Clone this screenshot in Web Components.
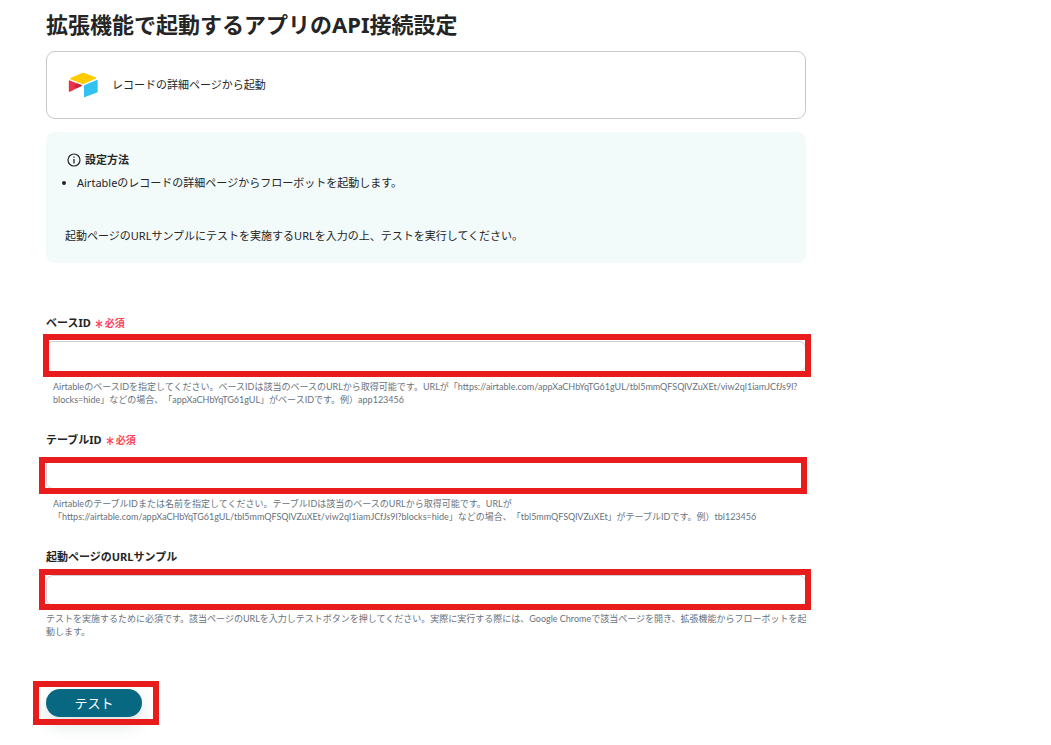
<!DOCTYPE html>
<html lang="ja">
<head>
<meta charset="utf-8">
<title>API接続設定</title>
<style>
body { margin: 0; background: #fff; color: #252525; font-family: "Noto Sans", "Noto Sans CJK JP", sans-serif; font-size: 11px; line-height: 20px; text-spacing-trim: space-all; }
</style>
</head>
<body>
<connection-page></connection-page>
<script>
class BaseElement extends HTMLElement {
  render(html) {
    const t = document.createElement("template");
    t.innerHTML = html;
    this.attachShadow({ mode: "open" }).append(t.content.cloneNode(true));
  }
}

customElements.define("app-card", class extends BaseElement {
  constructor() {
    super();
    this.render(`<style>
      :host { display: flex; align-items: center; gap: 13px; box-sizing: border-box; min-height: 68px; padding: 0 21px; border: 1px solid #c8c8c8; border-radius: 9px; }
      svg { display: block; flex: none; }
    </style>
    <svg width="31" height="26" viewBox="0 0 31 26" aria-hidden="true">
      <path fill="#ffcc00" d="M14 1.1Q15.2.5 16.4 1.1L28 5.5Q29 6 28 6.6L16.2 11.7Q15 12.2 13.8 11.7L2.4 7.2Q1.3 6.6 2.4 6Z"/>
      <path fill="#31c2f2" d="M16 14Q16 13.2 16.7 12.9L28.8 8.1Q29.7 7.8 29.7 8.8V19.6Q29.7 20.3 29 20.6L17 25.1Q16 25.4 16 24.5Z"/>
      <path fill="#ed3049" d="M.8 9Q.8 8 1.8 8.4L13.4 13.1Q14.4 13.6 13.4 14.1L2 19.7Q.8 20.2.8 19.2Z"/>
      <path fill="#c8233e" d="M9.6 11.6L13.4 13.1Q14.4 13.6 13.4 14.1L8.8 16.3L5.4 14.2Z"/>
    </svg>
    <slot></slot>`);
  }
});

customElements.define("info-box", class extends BaseElement {
  constructor() {
    super();
    this.render(`<style>
      :host { display: block; padding: 18px 19px 17px; border-radius: 9px; background: #f2fafa; }
      h2 { display: flex; align-items: center; gap: 4px; margin: 0; padding-left: 2px; font-size: 11px; line-height: 20px; }
      svg { display: block; }
    </style>
    <h2><svg width="14" height="14" viewBox="0 0 14 14" aria-hidden="true"><circle cx="7" cy="7" r="6" fill="none" stroke="#252525" stroke-width="1.2"/><path d="M7 3.4V4.8M7 6.1V10.4" stroke="#252525" stroke-width="1.3"/></svg><slot name="heading"></slot></h2>
    <slot></slot>`);
  }
});

customElements.define("text-field", class extends BaseElement {
  constructor() {
    super();
    this.render(`<style>
      :host { display: block; }
      label { display: flex; gap: 4px; margin-bottom: 8px; font-weight: 700; line-height: 20px; }
      .required { display: none; align-items: center; gap: 2px; color: #ff4356; font-size: 10px; }
      :host([required]) .required { display: flex; }
      .box { position: relative; }
      .box::after { content: ""; position: absolute; inset: var(--mark-inset); border: 6px solid #e81c1c; pointer-events: none; }
      input { display: block; box-sizing: border-box; width: 100%; height: 31px; padding: 0 10px; border: 1px solid #ccd0d4; border-radius: 7px; background: #fff; color: inherit; font: inherit; outline: none; }
      p { margin: 8px 0 0; padding-left: 7px; color: #68727c; font-family: Lato, "Noto Sans CJK JP", sans-serif; font-size: 9px; line-height: 13px; }
      :host([flush]) p { margin: 6px -4px 0 0; padding-left: 0; }
    </style>
    <label for="field"><slot name="label"></slot><span class="required"><svg width="8" height="12" viewBox="0 0 8 12" aria-hidden="true"><path d="M4 2.8V11M.8 4.8L7.2 9M7.2 4.8L.8 9" fill="none" stroke="#ff4356" stroke-width="1.2"/></svg>必須</span></label>
    <div class="box"><input id="field" type="text" aria-describedby="help"></div>
    <p id="help"><slot></slot></p>`);
  }
});

customElements.define("test-button", class extends BaseElement {
  constructor() {
    super();
    this.render(`<style>
      :host { display: inline-block; position: relative; }
      :host::after { content: ""; position: absolute; inset: -8px -17px -8px -13px; border: 6px solid #e81c1c; pointer-events: none; }
      button { display: block; min-width: 96px; height: 28px; padding: 0 28px; border: 0; border-radius: 14px; background: #086781; color: #fff; font: inherit; font-size: 13px; line-height: 28px; box-shadow: 0 8px 16px rgba(20, 70, 80, .15); cursor: pointer; }
    </style>
    <button type="button"><slot></slot></button>`);
  }
});

customElements.define("connection-page", class extends BaseElement {
  constructor() {
    super();
    this.render(`<style>
      :host { display: block; max-width: 760px; padding: 7px 46px 28px; }
      h1 { margin: 0 0 10px; font-size: 22px; line-height: 34px; }
      info-box { margin-top: 13px; }
      ul { margin: 3px 0 33px; padding-left: 12px; }
      p { margin: 0; }
      form { display: grid; gap: 24px; margin-top: 50px; }
      .base { --mark-inset: -7px -5px -5px -3px; }
      .table { --mark-inset: -1px -1px -5px -7px; }
      .sample { --mark-inset: -6px -5px -4px -7px; }
      footer { margin-top: 51px; line-height: 0; }
    </style>
    <main>
      <h1>拡張機能で起動するアプリのAPI接続設定</h1>
      <app-card>レコードの詳細ページから起動</app-card>
      <info-box>
        <span slot="heading">設定方法</span>
        <ul><li>Airtableのレコードの詳細ページからフローボットを起動します。</li></ul>
        <p>起動ページのURLサンプルにテストを実施するURLを入力の上、テストを実行してください。</p>
      </info-box>
      <form>
        <text-field class="base" required><span slot="label">ベースID</span>AirtableのベースIDを指定してください。ベースIDは該当のベースのURLから取得可能です。URLが「https://airtable.com/appXaCHbYqTG61gUL/tbl5mmQFSQlVZuXEt/viw2ql1iamJCfJs9l?blocks=hide」などの場合、「appXaCHbYqTG61gUL」がベースIDです。例）app123456</text-field>
        <text-field class="table" required><span slot="label">テーブルID</span>AirtableのテーブルIDまたは名前を指定してください。テーブルIDは該当のベースのURLから取得可能です。URLが「https://airtable.com/appXaCHbYqTG61gUL/tbl5mmQFSQlVZuXEt/viw2ql1iamJCfJs9l?blocks=hide」などの場合、「tbl5mmQFSQlVZuXEt」がテーブルIDです。例）tbl123456</text-field>
        <text-field class="sample" flush><span slot="label">起動ページのURLサンプル</span>テストを実施するために必須です。該当ページのURLを入力しテストボタンを押してください。実際に実行する際には、Google Chromeで該当ページを開き、拡張機能からフローボットを起動します。</text-field>
      </form>
      <footer><test-button>テスト</test-button></footer>
    </main>`);
  }
});
</script>
</body>
</html>
